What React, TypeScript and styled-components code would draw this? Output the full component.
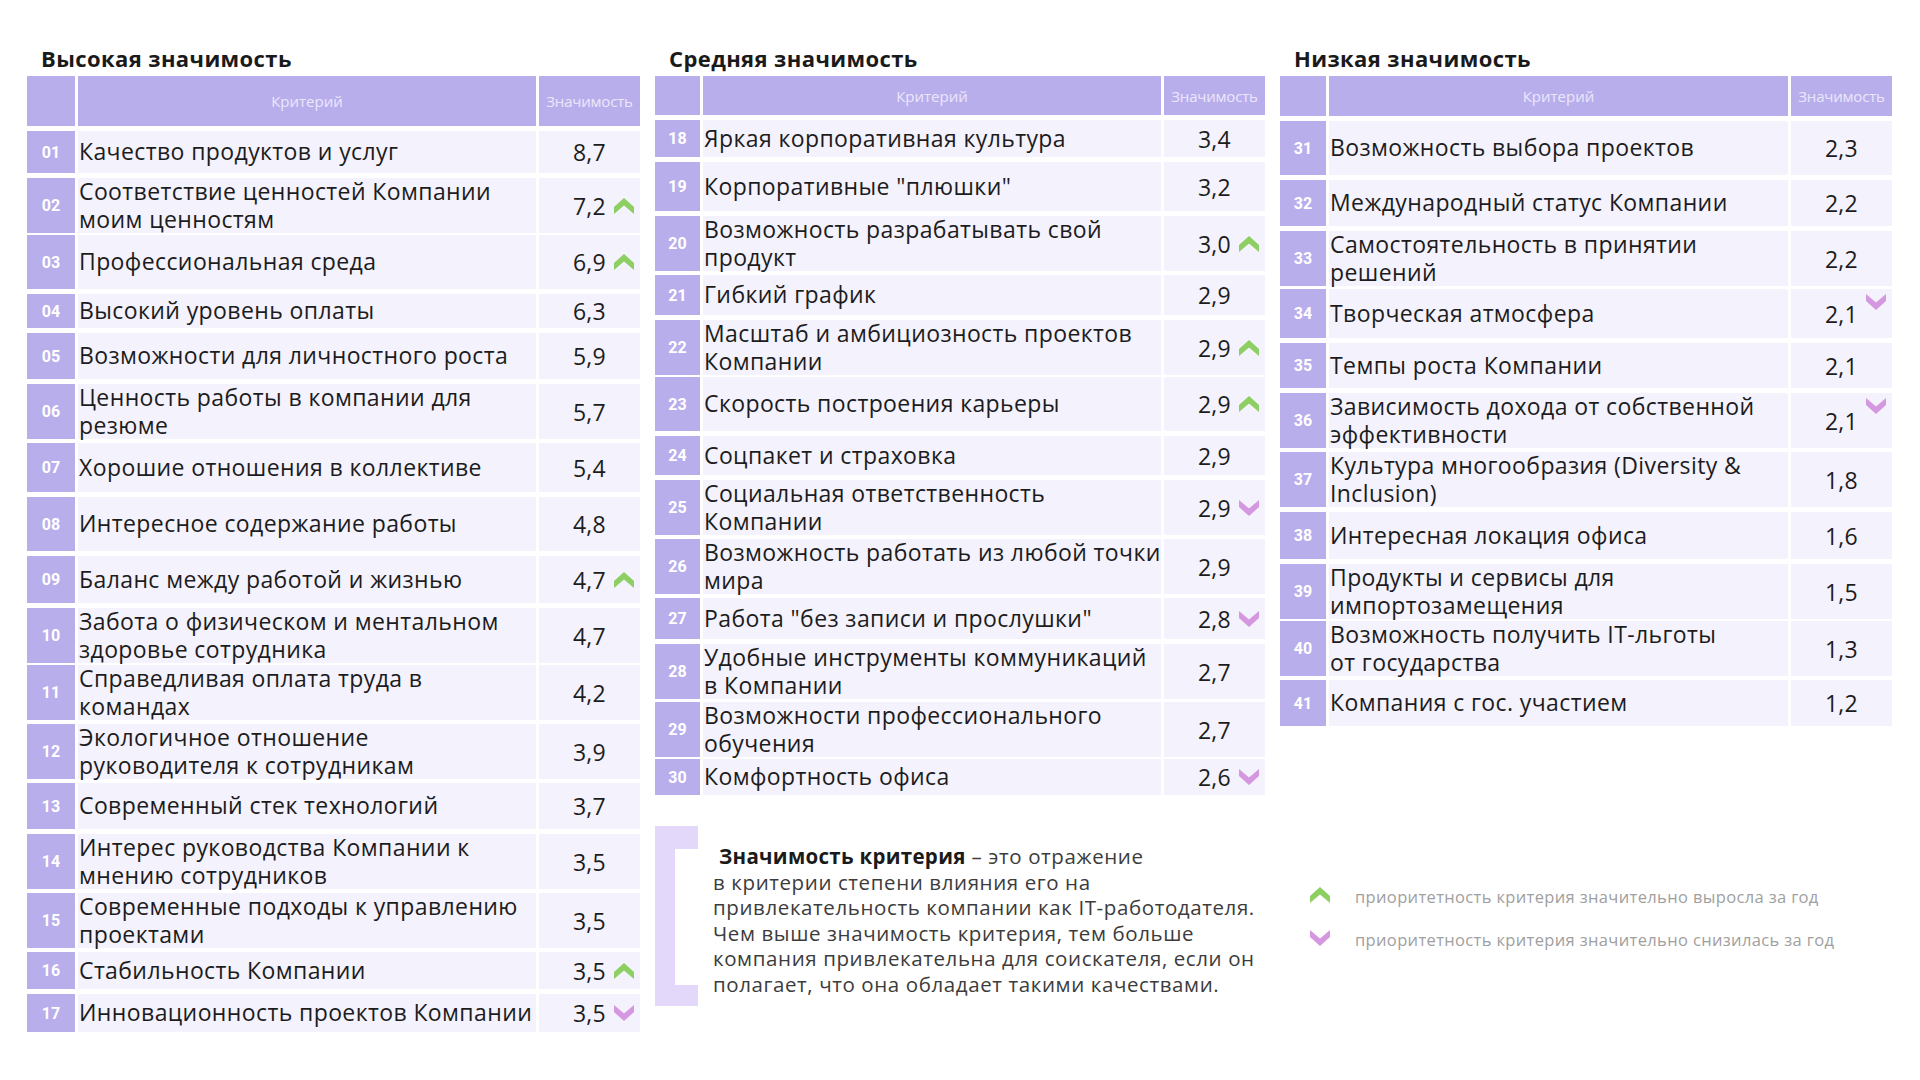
import React from 'react';
import styled, { createGlobalStyle } from 'styled-components';

type Trend = 'up' | 'down';

interface Criterion {
    n: string;
    text: string;
    value: string;
    h: number;
    trend?: Trend;
    top?: boolean;
}

const high: Criterion[] = [
    {n: '01', text: 'Качество продуктов и услуг', value: '8,7', h: 42},
    {n: '02', text: 'Соответствие ценностей Компании\nмоим ценностям', value: '7,2', h: 52, trend: 'up'},
    {n: '03', text: 'Профессиональная среда', value: '6,9', h: 54, trend: 'up'},
    {n: '04', text: 'Высокий уровень оплаты', value: '6,3', h: 34},
    {n: '05', text: 'Возможности для личностного роста', value: '5,9', h: 46},
    {n: '06', text: 'Ценность работы в компании для\nрезюме', value: '5,7', h: 54},
    {n: '07', text: 'Хорошие отношения в коллективе', value: '5,4', h: 49},
    {n: '08', text: 'Интересное содержание работы', value: '4,8', h: 54},
    {n: '09', text: 'Баланс между работой и жизнью', value: '4,7', h: 47, trend: 'up'},
    {n: '10', text: 'Забота о физическом и ментальном\nздоровье сотрудника', value: '4,7', h: 52},
    {n: '11', text: 'Справедливая оплата труда в\nкомандах', value: '4,2', h: 54},
    {n: '12', text: 'Экологичное отношение\nруководителя к сотрудникам', value: '3,9', h: 54},
    {n: '13', text: 'Современный стек технологий', value: '3,7', h: 46},
    {n: '14', text: 'Интерес руководства Компании к\nмнению сотрудников', value: '3,5', h: 54},
    {n: '15', text: 'Современные подходы к управлению\nпроектами', value: '3,5', h: 54},
    {n: '16', text: 'Стабильность Компании', value: '3,5', h: 37, trend: 'up'},
    {n: '17', text: 'Инновационность проектов Компании', value: '3,5', h: 38, trend: 'down'},
];

const medium: Criterion[] = [
    {n: '18', text: 'Яркая корпоративная культура', value: '3,4', h: 37},
    {n: '19', text: 'Корпоративные "плюшки"', value: '3,2', h: 49},
    {n: '20', text: 'Возможность разрабатывать свой\nпродукт', value: '3,0', h: 54, trend: 'up'},
    {n: '21', text: 'Гибкий график', value: '2,9', h: 40},
    {n: '22', text: 'Масштаб и амбициозность проектов\nКомпании', value: '2,9', h: 52, trend: 'up'},
    {n: '23', text: 'Скорость построения карьеры', value: '2,9', h: 54, trend: 'up'},
    {n: '24', text: 'Соцпакет и страховка', value: '2,9', h: 39},
    {n: '25', text: 'Социальная ответственность\nКомпании', value: '2,9', h: 54, trend: 'down'},
    {n: '26', text: 'Возможность работать из любой точки\nмира', value: '2,9', h: 54},
    {n: '27', text: 'Работа "без записи и прослушки"', value: '2,8', h: 41, trend: 'down'},
    {n: '28', text: 'Удобные инструменты коммуникаций\nв Компании', value: '2,7', h: 53},
    {n: '29', text: 'Возможности профессионального\nобучения', value: '2,7', h: 52},
    {n: '30', text: 'Комфортность офиса', value: '2,6', h: 36, trend: 'down'},
];

const low: Criterion[] = [
    {n: '31', text: 'Возможность выбора проектов', value: '2,3', h: 54},
    {n: '32', text: 'Международный статус Компании', value: '2,2', h: 46},
    {n: '33', text: 'Самостоятельность в принятии\nрешений', value: '2,2', h: 53},
    {n: '34', text: 'Творческая атмосфера', value: '2,1', h: 49, trend: 'down', top: true},
    {n: '35', text: 'Темпы роста Компании', value: '2,1', h: 45},
    {n: '36', text: 'Зависимость дохода от собственной\nэффективности', value: '2,1', h: 54, trend: 'down', top: true},
    {n: '37', text: 'Культура многообразия (Diversity &\nInclusion)', value: '1,8', h: 55},
    {n: '38', text: 'Интересная локация офиса', value: '1,6', h: 47},
    {n: '39', text: 'Продукты и сервисы для\nимпортозамещения', value: '1,5', h: 52},
    {n: '40', text: 'Возможность получить IT-льготы\nот государства', value: '1,3', h: 54},
    {n: '41', text: 'Компания с гос. участием', value: '1,2', h: 46},
];

const GlobalStyle = createGlobalStyle`
    html, body {
        margin: 0;
        padding: 0;
        background: #ffffff;
    }

    body {
        font-family: "Open Sans", "Liberation Sans", sans-serif;
        color: #1e1e1e;
    }
`;

function Chevron({trend}: { trend: Trend }) {
    if (trend === 'up') {
        return (
            <svg width="20" height="16" viewBox="0 0 20 16">
                <polygon points="0,9 10,0 20,9 20,16 10,7.5 0,16" fill="#8dcf62"/>
            </svg>
        );
    }
    return (
        <svg width="20" height="16" viewBox="0 0 20 16">
            <polygon points="0,0 10,8.5 20,0 20,7 10,16 0,7" fill="#d597e0"/>
        </svg>
    );
}

function Table({rows, numW, headH}: { rows: Criterion[]; numW: number; headH: number }) {
    return (
        <Grid>
            <Row $numW={numW} $h={headH}>
                <HeadCell/>
                <HeadCell>Критерий</HeadCell>
                <HeadCell $small>Значимость</HeadCell>
            </Row>
            {rows.map(r => (
                <Row key={r.n} $numW={numW} $h={r.h}>
                    <NumCell>{r.n}</NumCell>
                    <TextCell>{r.text}</TextCell>
                    <ValueCell>
                        {r.value}
                        {r.trend && (
                            <Mark $top={r.top}>
                                <Chevron trend={r.trend}/>
                            </Mark>
                        )}
                    </ValueCell>
                </Row>
            ))}
        </Grid>
    );
}

export default function App() {
    return (
        <>
            <GlobalStyle/>
            <Page>
                <Column $w={613}>
                    <Title>Высокая значимость</Title>
                    <Table rows={high} numW={48} headH={50}/>
                </Column>
                <Column $w={610}>
                    <Title>Средняя значимость</Title>
                    <Table rows={medium} numW={45} headH={39}/>
                    <Note>
                        <Bracket/>
                        <NoteText>
                            {'\u00a0'}<b>Значимость критерия</b> – это отражение<br/>
                            в критерии степени влияния его на<br/>
                            привлекательность компании как IT-работодателя.<br/>
                            Чем выше значимость критерия, тем больше<br/>
                            компания привлекательна для соискателя, если он<br/>
                            полагает, что она обладает такими качествами.
                        </NoteText>
                    </Note>
                </Column>
                <Column $w={612}>
                    <Title>Низкая значимость</Title>
                    <Table rows={low} numW={46} headH={40}/>
                    <Legend>
                        <LegendItem>
                            <Chevron trend="up"/>
                            <span>приоритетность критерия значительно выросла за год</span>
                        </LegendItem>
                        <LegendItem>
                            <Chevron trend="down"/>
                            <span>приоритетность критерия значительно снизилась за год</span>
                        </LegendItem>
                    </Legend>
                </Column>
            </Page>
        </>
    );
}

const Page = styled.div`
    display: flex;
    align-items: flex-start;
    gap: 15px;
    width: 1920px;
    height: 1080px;
    box-sizing: border-box;
    padding: 46px 0 0 27px;
`;

const Column = styled.section<{ $w: number }>`
    width: ${p => p.$w}px;
    display: flex;
    flex-direction: column;
`;

const Title = styled.h2`
    margin: 0 0 5px 14px;
    font-size: 22px;
    line-height: 25px;
    font-weight: 700;
    color: #1a1a1a;
    letter-spacing: 0.4px;
`;

const Grid = styled.div`
    display: flex;
    flex-direction: column;
    gap: 5px;
`;

const Row = styled.div<{ $numW: number; $h: number }>`
    display: grid;
    grid-template-columns: ${p => p.$numW}px 1fr 101px;
    column-gap: 3px;
    height: ${p => p.$h}px;
`;

const HeadCell = styled.div<{ $small?: boolean }>`
    background: #b9aeec;
    color: #ebe7fb;
    display: flex;
    align-items: center;
    justify-content: center;
    font-size: 15px;
    letter-spacing: ${p => (p.$small ? '-0.2px' : '0')};
    font-weight: 400;
`;

const NumCell = styled.div`
    background: #b9aeec;
    color: #ffffff;
    display: flex;
    align-items: center;
    justify-content: center;
    font-family: Roboto, "Liberation Sans", sans-serif;
    font-weight: 700;
    font-size: 16px;
`;

const TextCell = styled.div`
    background: #f4f2fd;
    display: flex;
    align-items: center;
    padding: 0 0 0 1px;
    font-size: 23px;
    line-height: 27.5px;
    letter-spacing: 0.4px;
    white-space: pre-line;
    color: #1c1c1c;
`;

const ValueCell = styled.div`
    position: relative;
    background: #f4f2fd;
    display: flex;
    align-items: center;
    justify-content: center;
    font-size: 23px;
    letter-spacing: 0.3px;
    color: #1c1c1c;
`;

const Mark = styled.span<{ $top?: boolean }>`
    position: absolute;
    right: 6px;
    top: ${p => (p.$top ? '5px' : '50%')};
    transform: ${p => (p.$top ? 'none' : 'translateY(-50%)')};
    display: flex;
`;

const Note = styled.div`
    display: flex;
    margin-top: 31px;
`;

const Bracket = styled.div`
    width: 23px;
    height: 136px;
    border-left: 20px solid #e3d8fa;
    border-top: 23px solid #e3d8fa;
    border-bottom: 21px solid #e3d8fa;
    flex-shrink: 0;
`;

const NoteText = styled.p`
    margin: 0 0 0 15px;
    padding-top: 18px;
    font-size: 20.5px;
    line-height: 25.5px;
    letter-spacing: 0.6px;
    color: #3c3c3c;
    white-space: nowrap;

    & b {
        color: #1a1a1a;
        font-weight: 700;
        letter-spacing: 0.3px;
    }
`;

const Legend = styled.div`
    display: flex;
    flex-direction: column;
    gap: 17px;
    margin-top: 156px;
    margin-left: 30px;
`;

const LegendItem = styled.div`
    display: flex;
    align-items: center;
    gap: 25px;
    font-size: 16.5px;
    color: #a0a0a0;
    letter-spacing: 0.35px;

    & span {
        padding-top: 3px;
    }
`;
